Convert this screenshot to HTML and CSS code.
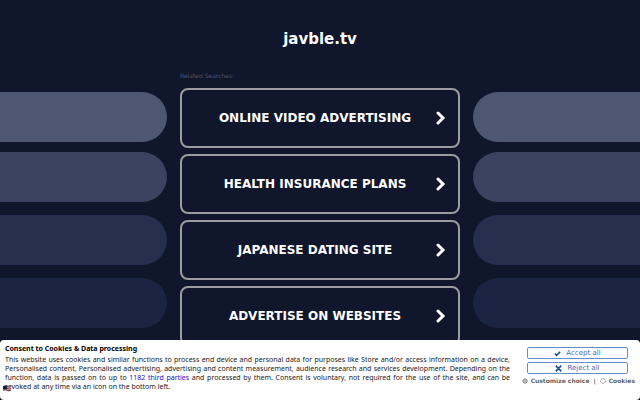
FILE: index.html
```html
<!DOCTYPE html>
<html lang="en">
<head>
    <meta charset="UTF-8">
    <meta name="viewport" content="width=device-width, initial-scale=1.0">
    <title>javble.tv</title>
    <link rel="stylesheet" href="styles.css">
</head>
<body>
    <div class="page">
        <div class="side side-left">
            <div class="pill pill-1"></div>
            <div class="pill pill-2"></div>
            <div class="pill pill-3"></div>
            <div class="pill pill-4"></div>
        </div>

        <main class="content">
            <h1>javble.tv</h1>
            <p class="related">Related Searches:</p>
            <nav class="searches">
                <a class="search" href="#">
                    <span class="search-text">ONLINE VIDEO ADVERTISING</span>
                    <svg class="chevron" viewBox="0 0 10 14"><path d="M2 2l5 5-5 5"/></svg>
                </a>
                <a class="search" href="#">
                    <span class="search-text">HEALTH INSURANCE PLANS</span>
                    <svg class="chevron" viewBox="0 0 10 14"><path d="M2 2l5 5-5 5"/></svg>
                </a>
                <a class="search" href="#">
                    <span class="search-text">JAPANESE DATING SITE</span>
                    <svg class="chevron" viewBox="0 0 10 14"><path d="M2 2l5 5-5 5"/></svg>
                </a>
                <a class="search" href="#">
                    <span class="search-text">ADVERTISE ON WEBSITES</span>
                    <svg class="chevron" viewBox="0 0 10 14"><path d="M2 2l5 5-5 5"/></svg>
                </a>
            </nav>
        </main>

        <div class="side side-right">
            <div class="pill pill-1"></div>
            <div class="pill pill-2"></div>
            <div class="pill pill-3"></div>
            <div class="pill pill-4"></div>
        </div>
    </div>

    <!-- Cookie consent -->
    <div class="consent-wrap">
        <section class="consent">
            <div class="consent-body">
                <h2>Consent to Cookies &amp; Data processing</h2>
                <p class="consent-line">This website uses cookies and similar functions to process end device and personal data for purposes like Store and/or access information on a device,<br>
                Personalised content, Personalised advertising, advertising and content measurement, audience research and services development. Depending on the<br>
                function, data is passed on to up to <a href="#">1182 third parties</a> and processed by them. Consent is voluntary, not required for the use of the site, and can be</p>
                <p>revoked at any time via an icon on the bottom left.</p>
            </div>
            <div class="consent-actions">
                <button type="button">
                    <svg viewBox="0 0 8 8"><path d="M1 4l2 2 4-4"/></svg>
                    Accept all
                </button>
                <button type="button">
                    <svg viewBox="0 0 8 8"><path d="M1 1l6 6M7 1l-6 6M1 1h1M6 1h1M1 7h1M6 7h1"/></svg>
                    Reject all
                </button>
                <div class="consent-links">
                    <a href="#"><svg viewBox="0 0 6 6"><circle cx="3" cy="3" r="2" fill="#bbb"/><path d="M3 0v1M3 5v1M0 3h1M5 3h1M1 1l1 1M4 4l1 1M5 1l-1 1M1 5l1-1"/></svg>Customize choice</a>
                    <span>|</span>
                    <a href="#"><svg viewBox="0 0 6 6"><circle cx="3" cy="3" r="2.4" stroke-dasharray="2 .6"/></svg>Cookies</a>
                </div>
            </div>
        </section>
        <!-- Language flag -->
        <svg class="flag" viewBox="0 0 8 7">
            <path d="M0 1q2-1 4 0t4 0v5q-2 1-4 0t-4 0z" fill="#d8c4cc"/>
            <path d="M4 1.5q2 1 4 0M4 3.5q2 1 4 0M0 5.2q2-1 4 0t4 0" stroke="#7c3045" fill="none"/>
            <path d="M0 1q2-1 4 0v3.500q-2-1-4 0z" fill="#1c1c38"/>
        </svg>
    </div>
</body>
</html>
```
FILE: styles.css
```css
* {
    margin: 0;
    padding: 0;
    box-sizing: border-box;
}

body {
    font-family: "DejaVu Sans", Verdana, sans-serif;
    background-color: #10162b;
    height: 100vh;
    overflow: hidden;
}

.page {
    display: grid;
    grid-template-columns: 1fr 280px 1fr;
    column-gap: 13px;
}

.side {
    display: flex;
    flex-direction: column;
    gap: 13px;
    padding-top: 92px;
}

.pill {
    height: 50px;
}

.side-left .pill {
    border-radius: 0 25px 25px 0;
}

.side-right .pill {
    border-radius: 25px 0 0 25px;
}

.pill-1 {
    background-color: #4e5772;
    margin-bottom: -3px;
}

.pill-2 {
    background-color: #3c4361;
}

.pill-3 {
    background-color: #262f4d;
}

.pill-4 {
    background-color: #1b2442;
}

h1 {
    font-size: 15px;
    line-height: 18px;
    color: #fff;
    text-align: center;
    padding-top: 30px;
}

.related {
    font-size: 6px;
    line-height: 8px;
    color: #50556f;
    margin-top: 24px;
}

.searches {
    display: flex;
    flex-direction: column;
    gap: 6px;
    margin-top: 8px;
}

.search {
    display: flex;
    align-items: center;
    height: 60px;
    padding: 0 12px;
    border: 2px solid #9c9da3;
    border-radius: 8px;
    color: #fff;
    text-decoration: none;
}

.search-text {
    flex: 1;
    font-size: 12px;
    line-height: 16px;
    font-weight: bold;
    text-align: center;
}

.chevron {
    width: 10px;
    height: 14px;
    fill: none;
    stroke: #fff;
    stroke-width: 3;
    stroke-linecap: round;
}

.consent-wrap {
    position: fixed;
    left: 0;
    right: 0;
    bottom: 0;
    background-color: #000;
}

.consent {
    display: flex;
    gap: 17px;
    min-height: 60px;
    padding: 4px 5px;
    background-color: #fff;
    border-radius: 4px;
}

.consent-body {
    flex: 1;
    font-family: "Noto Sans", "DejaVu Sans", sans-serif;
    font-size: 7px;
    line-height: 9px;
}

.consent h2 {
    font-size: 7px;
    color: #000;
    margin-bottom: 2px;
}

.consent p {
    color: #222;
}

.consent .consent-line {
    text-align: justify;
    text-align-last: justify;
}

.consent p a {
    color: #1a0dcc;
    text-decoration: none;
}

.consent-actions {
    display: flex;
    flex-direction: column;
    gap: 3px;
    padding-top: 3px;
    width: 108px;
}

.consent-actions button {
    display: flex;
    align-items: center;
    justify-content: center;
    gap: 5px;
    width: 101px;
    height: 12px;
    font-family: inherit;
    font-size: 7px;
    color: #3f6cb5;
    background-color: #fff;
    border: 1px solid #6a8cc4;
    border-radius: 2px;
    cursor: pointer;
}

.consent-actions button svg {
    width: 7px;
    height: 7px;
    fill: none;
    stroke: #1f4f9f;
    stroke-width: 2;
}

.consent-links {
    display: flex;
    justify-content: flex-end;
    gap: 4px;
    font-size: 6px;
    line-height: 8px;
    font-weight: bold;
    white-space: nowrap;
    color: #666;
}

.consent-links a {
    display: flex;
    align-items: center;
    gap: 3px;
    color: #666;
    text-decoration: none;
}

.consent-links svg {
    width: 6px;
    height: 6px;
    fill: none;
    stroke: #999;
}

.flag {
    position: absolute;
    left: 3px;
    bottom: 8px;
    width: 8px;
    height: 7px;
}
```
